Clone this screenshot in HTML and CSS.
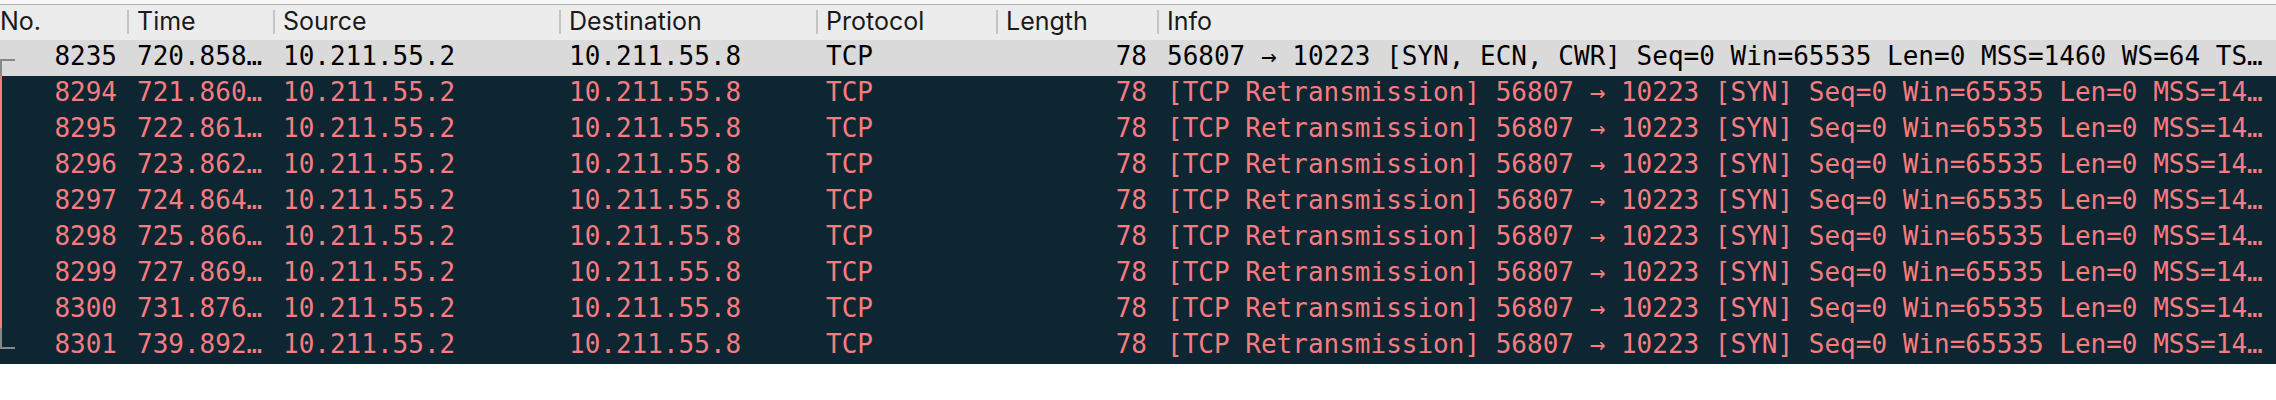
FILE: index.html
```html
<!DOCTYPE html>
<html lang="en">
<head>
<meta charset="utf-8">
<title>Packet list</title>
<link rel="stylesheet" href="styles.css">
</head>
<body>
<div class="packet-list">
  <div class="cols header">
    <div class="hcell first">No.</div>
    <div class="hcell">Time</div>
    <div class="hcell">Source</div>
    <div class="hcell">Destination</div>
    <div class="hcell">Protocol</div>
    <div class="hcell">Length</div>
    <div class="hcell">Info</div>
  </div>

  <div class="cols pkt normal">
    <div class="cell num tree tree-start">8235</div>
    <div class="cell">720.858…</div>
    <div class="cell">10.211.55.2</div>
    <div class="cell">10.211.55.8</div>
    <div class="cell">TCP</div>
    <div class="cell num">78</div>
    <div class="cell">56807 → 10223 [SYN, ECN, CWR] Seq=0 Win=65535 Len=0 MSS=1460 WS=64 TS…</div>
  </div>
  <div class="cols pkt bad">
    <div class="cell num tree tree-mid">8294</div>
    <div class="cell">721.860…</div>
    <div class="cell">10.211.55.2</div>
    <div class="cell">10.211.55.8</div>
    <div class="cell">TCP</div>
    <div class="cell num">78</div>
    <div class="cell">[TCP Retransmission] 56807 → 10223 [SYN] Seq=0 Win=65535 Len=0 MSS=14…</div>
  </div>
  <div class="cols pkt bad">
    <div class="cell num tree tree-mid">8295</div>
    <div class="cell">722.861…</div>
    <div class="cell">10.211.55.2</div>
    <div class="cell">10.211.55.8</div>
    <div class="cell">TCP</div>
    <div class="cell num">78</div>
    <div class="cell">[TCP Retransmission] 56807 → 10223 [SYN] Seq=0 Win=65535 Len=0 MSS=14…</div>
  </div>
  <div class="cols pkt bad">
    <div class="cell num tree tree-mid">8296</div>
    <div class="cell">723.862…</div>
    <div class="cell">10.211.55.2</div>
    <div class="cell">10.211.55.8</div>
    <div class="cell">TCP</div>
    <div class="cell num">78</div>
    <div class="cell">[TCP Retransmission] 56807 → 10223 [SYN] Seq=0 Win=65535 Len=0 MSS=14…</div>
  </div>
  <div class="cols pkt bad">
    <div class="cell num tree tree-mid">8297</div>
    <div class="cell">724.864…</div>
    <div class="cell">10.211.55.2</div>
    <div class="cell">10.211.55.8</div>
    <div class="cell">TCP</div>
    <div class="cell num">78</div>
    <div class="cell">[TCP Retransmission] 56807 → 10223 [SYN] Seq=0 Win=65535 Len=0 MSS=14…</div>
  </div>
  <div class="cols pkt bad">
    <div class="cell num tree tree-mid">8298</div>
    <div class="cell">725.866…</div>
    <div class="cell">10.211.55.2</div>
    <div class="cell">10.211.55.8</div>
    <div class="cell">TCP</div>
    <div class="cell num">78</div>
    <div class="cell">[TCP Retransmission] 56807 → 10223 [SYN] Seq=0 Win=65535 Len=0 MSS=14…</div>
  </div>
  <div class="cols pkt bad">
    <div class="cell num tree tree-mid">8299</div>
    <div class="cell">727.869…</div>
    <div class="cell">10.211.55.2</div>
    <div class="cell">10.211.55.8</div>
    <div class="cell">TCP</div>
    <div class="cell num">78</div>
    <div class="cell">[TCP Retransmission] 56807 → 10223 [SYN] Seq=0 Win=65535 Len=0 MSS=14…</div>
  </div>
  <div class="cols pkt bad">
    <div class="cell num tree tree-mid">8300</div>
    <div class="cell">731.876…</div>
    <div class="cell">10.211.55.2</div>
    <div class="cell">10.211.55.8</div>
    <div class="cell">TCP</div>
    <div class="cell num">78</div>
    <div class="cell">[TCP Retransmission] 56807 → 10223 [SYN] Seq=0 Win=65535 Len=0 MSS=14…</div>
  </div>
  <div class="cols pkt bad">
    <div class="cell num tree tree-end">8301</div>
    <div class="cell">739.892…</div>
    <div class="cell">10.211.55.2</div>
    <div class="cell">10.211.55.8</div>
    <div class="cell">TCP</div>
    <div class="cell num">78</div>
    <div class="cell">[TCP Retransmission] 56807 → 10223 [SYN] Seq=0 Win=65535 Len=0 MSS=14…</div>
  </div>
</div>
</body>
</html>
```
FILE: styles.css
```css
* {
  box-sizing: border-box;
}

body {
  margin: 0;
  background: #ffffff;
}

.packet-list {
  border-top: 4px solid #f6f6f6;
}

.cols {
  display: grid;
  grid-template-columns: 127px 146px 286px 257px 180px 161px 1fr;
}

.header {
  height: 36px;
  background: #ececec;
  border-top: 1px solid #b2b2b2;
  font-family: Inter, "Liberation Sans", sans-serif;
  font-size: 25px;
  color: #1a1a1a;
}

.hcell {
  position: relative;
  padding-left: 10px;
  line-height: 32px;
  white-space: nowrap;
  overflow: hidden;
}

.hcell.first {
  padding-left: 0;
}

.hcell + .hcell::before {
  content: "";
  position: absolute;
  left: 0;
  top: 5px;
  width: 2px;
  height: 24px;
  background: #c4c4c4;
}

.pkt {
  height: 36px;
  font-family: "DejaVu Sans Mono", "Liberation Mono", monospace;
  font-size: 26px;
}

.pkt.normal {
  background: #dadada;
  color: #000000;
}

.pkt.bad {
  background: #0d2631;
  color: #f67c80;
}

.cell {
  padding: 0 10px;
  line-height: 33px;
  white-space: nowrap;
  overflow: hidden;
}

.cell.num {
  text-align: right;
}

.tree {
  position: relative;
}

.tree::before,
.tree::after {
  content: "";
  position: absolute;
  left: 0;
}

.tree-start::before {
  top: 19px;
  width: 15px;
  height: 2px;
  background: #888888;
}

.tree-start::after {
  top: 19px;
  bottom: 0;
  width: 2px;
  background: #888888;
}

.tree-mid::after {
  top: 0;
  bottom: 0;
  width: 2px;
  background: #f67c80;
}

.tree-end::before {
  top: 0;
  height: 21px;
  width: 2px;
  background: #888888;
}

.tree-end::after {
  top: 19px;
  width: 15px;
  height: 2px;
  background: #888888;
}
```
